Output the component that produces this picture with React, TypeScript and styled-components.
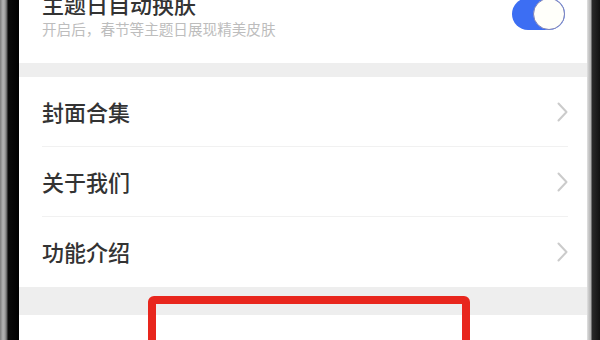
import React from "react";
import styled, { createGlobalStyle } from "styled-components";

const Global = createGlobalStyle`
  html, body { margin: 0; padding: 0; overflow: hidden; background: #000; }
  * { box-sizing: border-box; }
`;

const Frame = styled.div`
  display: flex;
  width: 600px;
  height: 340px;
  overflow: hidden;
  font-family: "Noto Sans CJK SC", "Noto Sans", sans-serif;
`;

const LeftBezel = styled.div`
  width: 19px;
  flex: none;
  background: linear-gradient(
    to right,
    #7c7c7c 0px,
    #b4b4b4 3px,
    #a0a0a0 5px,
    #5a5a5a 7px,
    #0a0a0a 8px,
    #000 100%
  );
`;

const RightBezel = styled.div`
  width: 13px;
  flex: none;
  background: linear-gradient(
    to right,
    #e2e2e2 0px,
    #c4c4c4 2px,
    #b0b0b0 4px,
    #2a2a2a 5px,
    #111 100%
  );
`;

const Screen = styled.div`
  position: relative;
  flex: 1;
  display: flex;
  flex-direction: column;
  background: #fff;
  overflow: hidden;
`;

const ThemeSection = styled.div`
  height: 63px;
  flex: none;
  display: flex;
  align-items: center;
  justify-content: space-between;
  padding: 0 22px 36px 23px;
`;

const TextBlock = styled.div`
  display: flex;
  flex-direction: column;
  gap: 2px;
`;

const Title = styled.div`
  font-size: 22px;
  line-height: 28px;
  font-weight: 500;
  color: #333;
`;

const Subtitle = styled.div`
  font-size: 14.6px;
  line-height: 20px;
  color: #bdbdbd;
`;

const Track = styled.div`
  width: 53px;
  height: 32px;
  margin-top: 1px;
  border-radius: 16px;
  background: #3c6ef3;
  display: flex;
  align-items: center;
  justify-content: flex-end;
`;

const Knob = styled.div`
  width: 32px;
  height: 32px;
  border-radius: 50%;
  background: #fffffa;
  border: 1.5px solid #7d82b8;
`;

const Band = styled.div<{ $h: number }>`
  height: ${(p) => p.$h}px;
  flex: none;
  background: #eeeeee;
`;

const List = styled.div`
  display: flex;
  flex-direction: column;
`;

const Row = styled.div<{ $divider?: boolean }>`
  height: 70px;
  flex: none;
  margin: 0 19px 0 23px;
  display: flex;
  align-items: center;
  justify-content: space-between;
  border-bottom: 1px solid ${(p) => (p.$divider ? "#f1f1f1" : "transparent")};
`;

const RowLabel = styled.span`
  font-size: 22px;
  line-height: 28px;
  font-weight: 500;
  color: #333;
  margin-top: -2px;
`;

const Chevron = styled.svg`
  width: 11px;
  height: 20px;
  flex: none;
`;

const Footer = styled.div`
  flex: 1;
  display: flex;
  justify-content: center;
  padding-top: 21px;
`;

const FooterText = styled.span`
  font-size: 22px;
  line-height: 28px;
  color: #555;
`;

const Highlight = styled.div`
  position: absolute;
  left: 129px;
  top: 296px;
  width: 322px;
  height: 90px;
  border: 8px solid #e8261d;
  border-radius: 6px;
`;

const Arrow = () => (
  <Chevron viewBox="0 0 11 20">
    <polyline
      points="1.5,1.5 9.5,10 1.5,18.5"
      fill="none"
      stroke="#cbcbcb"
      strokeWidth="2"
      strokeLinecap="round"
      strokeLinejoin="round"
    />
  </Chevron>
);

const items = ["封面合集", "关于我们", "功能介绍"];

export default function App() {
  return (
    <>
      <Global />
      <Frame>
        <LeftBezel />
        <Screen>
          <ThemeSection>
            <TextBlock>
              <Title>主题日自动换肤</Title>
              <Subtitle>开启后，春节等主题日展现精美皮肤</Subtitle>
            </TextBlock>
            <Track>
              <Knob />
            </Track>
          </ThemeSection>
          <Band $h={14} />
          <List>
            {items.map((t, i) => (
              <Row key={t} $divider={i < items.length - 1}>
                <RowLabel>{t}</RowLabel>
                <Arrow />
              </Row>
            ))}
          </List>
          <Band $h={28} />
          <Footer>
            <FooterText>退出登录</FooterText>
          </Footer>
          <Highlight />
        </Screen>
        <RightBezel />
      </Frame>
    </>
  );
}
